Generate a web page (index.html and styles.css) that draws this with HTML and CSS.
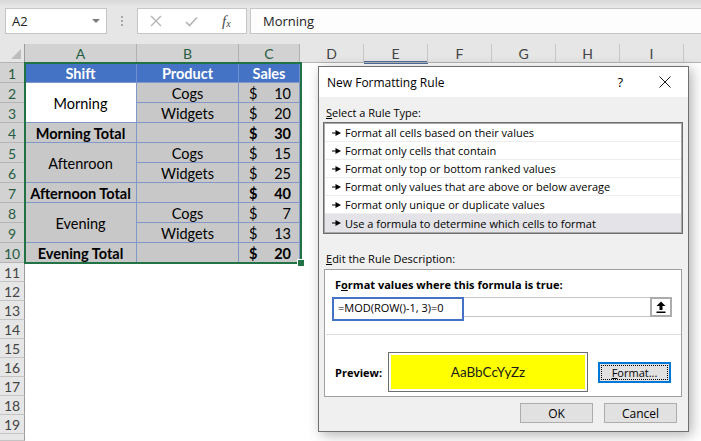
FILE: index.html
```html
<!DOCTYPE html>
<html>
<head>
<meta charset="utf-8">
<link rel="stylesheet" href="styles.css">
</head>
<body>
<div class="app">
  <div class="fbar">
    <div class="namebox"><span>A2</span><svg class="dd" width="8" height="4" viewBox="0 0 8 4"><path d="M0 0h8L4 4z" fill="#7a7a7a"/></svg></div>
    <div class="grip"><i></i><i></i><i></i></div>
    <div class="fxbox">
      <svg class="ico-x" width="12" height="12" viewBox="0 0 12 12"><path d="M1 1L11 11M11 1L1 11" stroke="#b4b4b4" stroke-width="1.4" fill="none"/></svg>
      <svg class="ico-ok" width="13" height="11" viewBox="0 0 13 11"><path d="M1 6L4.5 9.5L12 1.5" stroke="#b4b4b4" stroke-width="1.6" fill="none"/></svg>
      <span class="fx">f<sub>x</sub></span>
    </div>
    <div class="finput">Morning</div>
  </div>

  <div class="sheet">
    <div class="corner"><svg width="10" height="10" viewBox="0 0 10 10"><path d="M10 0V10H0z" fill="#bdbdbd"/></svg></div>
    <div class="ch sel">A</div>
    <div class="ch sel">B</div>
    <div class="ch sel">C</div>
    <div class="chrest">
      <div class="ch">D</div>
      <div class="ch hot">E</div>
      <div class="ch">F</div>
      <div class="ch">G</div>
      <div class="ch">H</div>
      <div class="ch">I</div>
      <div class="ch last"></div>
    </div>

    <div class="rh sel">1</div>
    <div class="c hd">Shift</div>
    <div class="c hd">Product</div>
    <div class="c hd">Sales</div>

    <div class="rh sel">2</div>
    <div class="c act span2">Morning</div>
    <div class="c">Cogs</div>
    <div class="c m"><span>$</span><span>10</span></div>

    <div class="rh sel">3</div>
    <div class="c">Widgets</div>
    <div class="c m"><span>$</span><span>20</span></div>

    <div class="rh sel">4</div>
    <div class="c b">Morning Total</div>
    <div class="c"></div>
    <div class="c m b"><span>$</span><span>30</span></div>

    <div class="rh sel">5</div>
    <div class="c span2">Aftenroon</div>
    <div class="c">Cogs</div>
    <div class="c m"><span>$</span><span>15</span></div>

    <div class="rh sel">6</div>
    <div class="c">Widgets</div>
    <div class="c m"><span>$</span><span>25</span></div>

    <div class="rh sel">7</div>
    <div class="c b">Afternoon Total</div>
    <div class="c"></div>
    <div class="c m b"><span>$</span><span>40</span></div>

    <div class="rh sel">8</div>
    <div class="c span2">Evening</div>
    <div class="c">Cogs</div>
    <div class="c m"><span>$</span><span>7</span></div>

    <div class="rh sel">9</div>
    <div class="c">Widgets</div>
    <div class="c m"><span>$</span><span>13</span></div>

    <div class="rh sel">10</div>
    <div class="c b">Evening Total</div>
    <div class="c"></div>
    <div class="c m b"><span>$</span><span>20</span></div>

    <div class="rh">11</div>
    <div class="rh">12</div>
    <div class="rh">13</div>
    <div class="rh">14</div>
    <div class="rh">15</div>
    <div class="rh">16</div>
    <div class="rh">17</div>
    <div class="rh">18</div>
    <div class="rh">19</div>
    <div class="rh"></div>

    <div class="selbox"><div class="handle"></div></div>
  </div>

  <div class="dialog">
    <div class="dtitle">
      <span>New Formatting Rule</span>
      <span class="q">?</span>
      <svg class="close" width="12" height="12" viewBox="0 0 12 12"><path d="M0.5 0.5L11.5 11.5M11.5 0.5L0.5 11.5" stroke="#1a1a1a" stroke-width="1" fill="none"/></svg>
    </div>
    <div class="dbody">
      <div class="lbl"><u>S</u>elect a Rule Type:</div>
      <div class="list">
        <div class="item"><svg class="arr" width="9" height="6" viewBox="0 0 9 6"><path d="M0 2.5h4v1H0z M3.5 0L9 3L3.5 6z" fill="#000"/></svg>Format all cells based on their values</div>
        <div class="item"><svg class="arr" width="9" height="6" viewBox="0 0 9 6"><path d="M0 2.5h4v1H0z M3.5 0L9 3L3.5 6z" fill="#000"/></svg>Format only cells that contain</div>
        <div class="item"><svg class="arr" width="9" height="6" viewBox="0 0 9 6"><path d="M0 2.5h4v1H0z M3.5 0L9 3L3.5 6z" fill="#000"/></svg>Format only top or bottom ranked values</div>
        <div class="item"><svg class="arr" width="9" height="6" viewBox="0 0 9 6"><path d="M0 2.5h4v1H0z M3.5 0L9 3L3.5 6z" fill="#000"/></svg>Format only values that are above or below average</div>
        <div class="item"><svg class="arr" width="9" height="6" viewBox="0 0 9 6"><path d="M0 2.5h4v1H0z M3.5 0L9 3L3.5 6z" fill="#000"/></svg>Format only unique or duplicate values</div>
        <div class="item on"><svg class="arr" width="9" height="6" viewBox="0 0 9 6"><path d="M0 2.5h4v1H0z M3.5 0L9 3L3.5 6z" fill="#000"/></svg>Use a formula to determine which cells to format</div>
      </div>
      <div class="lbl lbl2"><u>E</u>dit the Rule Description:</div>
      <div class="desc">
        <div class="dhead">F<u>o</u>rmat values where this formula is true:</div>
        <div class="frow">
          <div class="fsel">=MOD(ROW()-1, 3)=0</div>
          <div class="frest"></div>
          <div class="upbtn"><svg width="10" height="12" viewBox="0 0 10 12"><path d="M5 0.5L9.5 5H6.5V9H3.5V5H0.5z M0.5 10.5H9.5V12H0.5z" fill="#000"/></svg></div>
        </div>
        <div class="sep"></div>
        <div class="prow">
          <div class="plbl">Preview:</div>
          <div class="pbox"><div class="pfill">AaBbCcYyZz</div></div>
          <div class="fmtbtn"><span class="focus"><u>F</u>ormat...</span></div>
        </div>
      </div>
      <div class="btns">
        <div class="btn">OK</div>
        <div class="btn">Cancel</div>
      </div>
    </div>
  </div>
</div>
</body>
</html>
```

FILE: styles.css
```css
html, body {
  margin: 0;
  padding: 0;
}
body {
  width: 701px;
  height: 441px;
  overflow: hidden;
  background: #fff;
  font-family: "Lato", "Liberation Sans", sans-serif;
}
.app {
  position: relative;
  width: 701px;
  height: 441px;
  overflow: hidden;
}

/* formula bar */
.fbar {
  height: 44px;
  box-sizing: border-box;
  padding-top: 8px;
  display: flex;
  align-items: flex-start;
  background: linear-gradient(#d8d8d8, #e6e6e6 7px);
  font-family: "Open Sans", "Noto Sans", sans-serif;
}
.namebox {
  margin-left: 5px;
  width: 102px;
  height: 26px;
  box-sizing: border-box;
  border: 1px solid #c6c6c6;
  background: #fff;
  display: flex;
  align-items: center;
  justify-content: space-between;
  padding: 0 6px 0 6px;
  font-size: 13px;
  color: #222;
}
.grip {
  margin-left: 14px;
  width: 2px;
  height: 26px;
  display: flex;
  flex-direction: column;
  justify-content: center;
  gap: 2px;
}
.grip i {
  display: block;
  width: 2px;
  height: 2px;
  background: #a8a8a8;
}
.fxbox {
  margin-left: 14px;
  width: 110px;
  height: 26px;
  box-sizing: border-box;
  border: 1px solid #c6c6c6;
  background: #fff;
  display: flex;
  align-items: center;
}
.ico-x { margin-left: 12px; }
.ico-ok { margin-left: 23px; }
.fx {
  margin-left: 24px;
  font-family: "Liberation Serif", serif;
  font-style: italic;
  font-size: 15px;
  color: #4a4a4a;
  line-height: 1;
}
.fx sub {
  font-size: 10px;
  vertical-align: -1px;
}
.finput {
  margin-left: 3px;
  flex: 1;
  height: 26px;
  box-sizing: border-box;
  border: 1px solid #c6c6c6;
  border-right: none;
  background: #fdfdfd;
  padding-left: 12px;
  display: flex;
  align-items: center;
  font-size: 13px;
  color: #222;
}

/* sheet */
.sheet {
  position: relative;
  display: grid;
  grid-template-columns: 25px 112px 102px 61px 1fr;
  grid-template-rows: 19px repeat(10, 20px) repeat(9, 19px) 1fr;
  height: 397px;
}
.corner {
  background: #e6e6e6;
  border-right: 1px solid #9b9b9b;
  border-bottom: 1px solid #b4b4b4;
  box-sizing: border-box;
  display: flex;
  align-items: flex-end;
  justify-content: flex-end;
  padding: 0 3px 3px 0;
}
.ch {
  box-sizing: border-box;
  background: #e6e6e6;
  border-right: 1px solid #c8c8c8;
  border-bottom: 1px solid #b4b4b4;
  display: flex;
  align-items: center;
  justify-content: center;
  font-size: 14px;
  color: #444;
}
.ch.sel {
  background: #d2d2d2;
  color: #255c42;
  border-right-color: #b1b1b1;
}
.chrest {
  display: flex;
}
.chrest .ch {
  width: 64px;
}
.chrest .ch.last {
  flex: 1;
  border-right: none;
}
.ch.hot {
  box-shadow: inset 0 -1px 0 #4f6e9c, 0 1px 0 #4f6e9c;
}
.rh {
  grid-column: 1;
  box-sizing: border-box;
  background: #e6e6e6;
  border-right: 1px solid #9b9b9b;
  border-bottom: 1px solid #c4c4c4;
  display: flex;
  align-items: center;
  justify-content: center;
  padding-top: 1px;
  font-size: 14px;
  color: #444;
}
.rh.sel {
  background: #d2d2d2;
  color: #255c42;
  border-bottom-color: #b5b5b5;
}
.c {
  box-sizing: border-box;
  border-right: 1px solid #8197c8;
  border-bottom: 1px solid #8197c8;
  background: #c8c8c8;
  display: flex;
  align-items: center;
  justify-content: center;
  padding-top: 2px;
  font-size: 14.5px;
  color: #000;
  white-space: nowrap;
}
.c.hd {
  background: #4472c4;
  color: #fff;
  font-weight: 700;
  border-right-color: #6f8fcf;
}
.c.act { background: #fff; }
.c.b { font-weight: 700; }
.c.m {
  justify-content: space-between;
  padding: 2px 8px 0 10px;
}
.span2 { grid-row: span 2; }
.selbox {
  position: absolute;
  left: 24px;
  top: 18px;
  width: 278px;
  height: 202px;
  box-sizing: border-box;
  border: 2px solid #217346;
}
.handle {
  position: absolute;
  right: -5px;
  bottom: -5px;
  width: 6px;
  height: 6px;
  background: #217346;
  border: 1px solid #fff;
}

/* dialog */
.dialog {
  position: absolute;
  left: 318px;
  top: 66px;
  width: 371px;
  height: 366px;
  box-sizing: border-box;
  border: 1px solid #6f6f6f;
  background: #f0f0f0;
  box-shadow: 3px 3px 12px rgba(0, 0, 0, 0.3);
  font-family: "Open Sans", "Noto Sans", sans-serif;
  font-size: 11px;
  color: #000;
  display: flex;
  flex-direction: column;
}
.dtitle {
  height: 30px;
  flex: none;
  background: #fff;
  display: flex;
  align-items: center;
  padding-left: 8px;
  font-size: 12px;
}
.dtitle .q {
  margin-left: auto;
  font-size: 13px;
}
.dtitle .close {
  margin-left: 36px;
  margin-right: 17px;
}
.dbody {
  flex: 1;
  padding: 0 5px 0 4px;
  display: flex;
  flex-direction: column;
}
.lbl {
  margin-top: 8px;
  padding-left: 3px;
  height: 16px;
  line-height: 16px;
}
.lbl2 {
  margin-top: 17px;
}
.list {
  margin-top: 1px;
  height: 112px;
  box-sizing: border-box;
  border: 1px solid #6d6d6d;
  box-shadow: inset 0 0 0 1px #a8a8a8;
  background: #fff;
  padding: 1px;
}
.item {
  height: 18px;
  box-sizing: border-box;
  border-bottom: 1px solid #ededed;
  display: flex;
  align-items: center;
  padding-left: 7px;
  white-space: nowrap;
}
.item .arr {
  margin-right: 4px;
}
.item.on {
  background: #e3e3e8;
  border-bottom: none;
}
.desc {
  margin: 2px 1px 0 1px;
  height: 128px;
  box-sizing: border-box;
  border: 1px solid #a0a0a0;
  background: #fff;
}
.dhead {
  margin-top: 7px;
  padding-left: 10px;
  height: 16px;
  line-height: 16px;
  font-weight: 700;
}
.frow {
  margin: 4px 9px 0 7px;
  height: 20px;
  display: flex;
  align-items: flex-start;
}
.fsel {
  width: 132px;
  height: 24px;
  box-sizing: border-box;
  border: 2px solid #4472c4;
  padding-left: 4px;
  display: flex;
  align-items: center;
  padding-bottom: 3px;
}
.frest {
  flex: 1;
  height: 20px;
  box-sizing: border-box;
  border-top: 1px solid #c4c4c4;
  border-bottom: 1px solid #c4c4c4;
}
.upbtn {
  width: 22px;
  height: 20px;
  box-sizing: border-box;
  border: 2px solid #acacac;
  display: flex;
  align-items: center;
  justify-content: center;
  background: #fff;
}
.sep {
  margin: 17px 0 0 1px;
  height: 1px;
  background: #dcdcdc;
}
.prow {
  margin-top: 17px;
  padding-left: 10px;
  display: flex;
  align-items: center;
}
.plbl {
  width: 53px;
  font-weight: 700;
}
.pbox {
  width: 200px;
  height: 40px;
  box-sizing: border-box;
  border: 1px solid #6e6e6e;
  padding: 2px;
  background: #fff;
}
.pfill {
  height: 100%;
  background: #ffff00;
  display: flex;
  align-items: center;
  justify-content: center;
  font-family: "Lato", sans-serif;
  font-size: 13.5px;
  color: #1a1a1a;
}
.fmtbtn {
  margin-left: 10px;
  width: 73px;
  height: 21px;
  box-sizing: border-box;
  border: 2px solid #0078d7;
  background: #e1e1e1;
  padding: 1px;
  display: flex;
}
.fmtbtn .focus {
  flex: 1;
  border: 1px dotted #000;
  display: flex;
  align-items: center;
  justify-content: center;
}
.btns {
  margin-top: 6px;
  padding-right: 6px;
  display: flex;
  justify-content: flex-end;
  gap: 11px;
}
.btn {
  width: 73px;
  height: 20px;
  box-sizing: border-box;
  border: 1px solid #adadad;
  background: #e1e1e1;
  display: flex;
  align-items: center;
  justify-content: center;
  font-size: 12px;
}
```
